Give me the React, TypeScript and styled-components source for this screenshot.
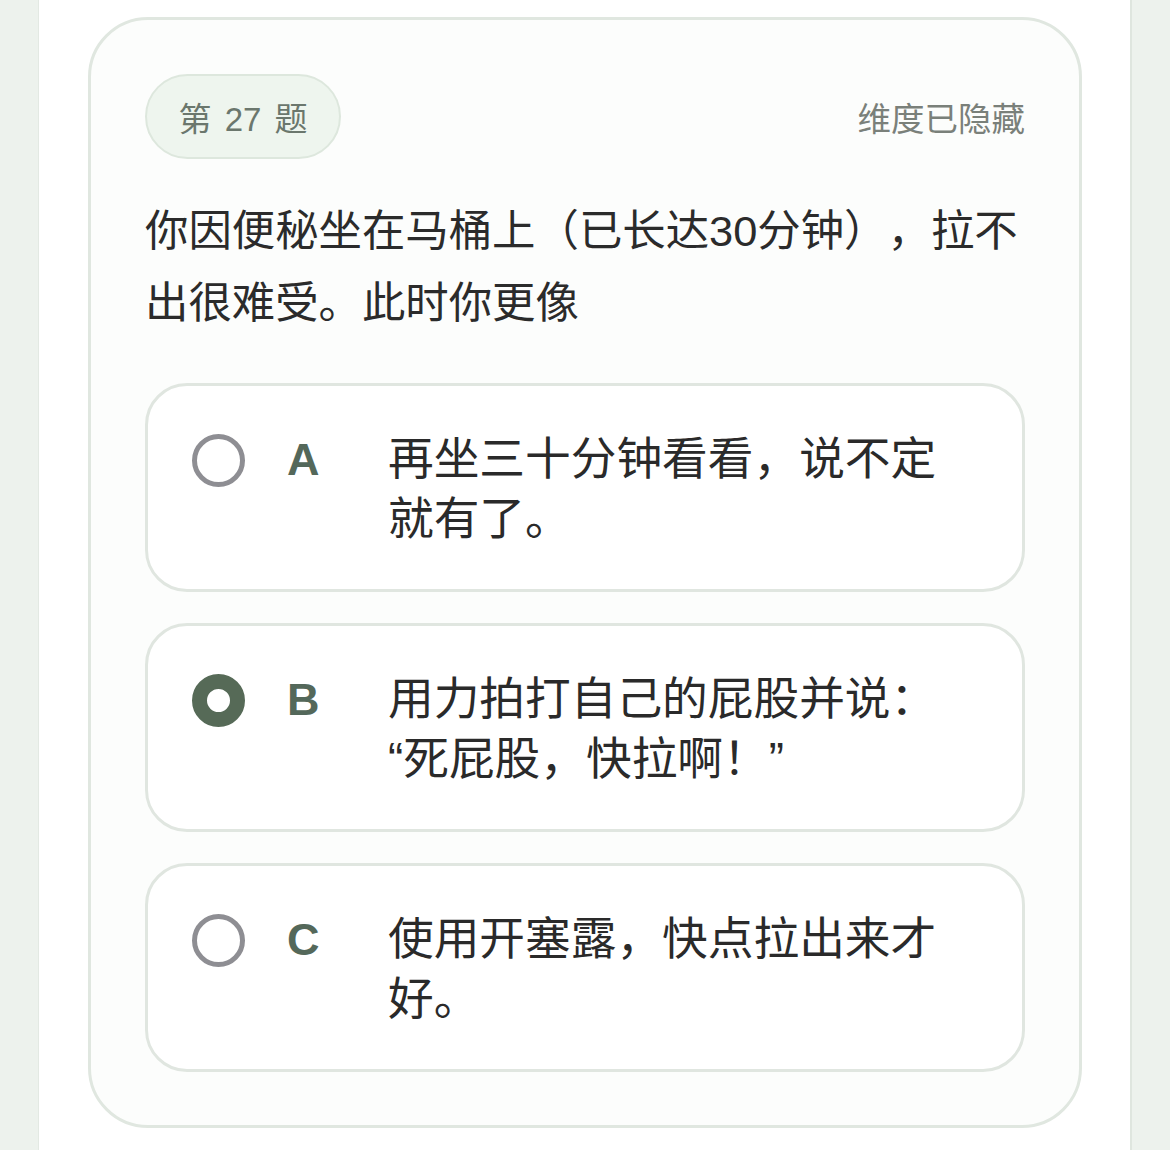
import { createGlobalStyle, styled } from "styled-components";

const GlobalStyle = createGlobalStyle`
  html, body {
    margin: 0;
    padding: 0;
    background: #edf2ed;
    font-family: "Liberation Sans", "Noto Sans CJK SC", sans-serif;
    text-spacing-trim: space-all;
  }
`;

type Option = {
  key: string;
  text: string;
};

// \u200B lets the line break after the colon like the original does
const options: Option[] = [
  { key: "A", text: "再坐三十分钟看看，说不定就有了。" },
  { key: "B", text: "用力拍打自己的屁股并说：\u200B“死屁股，快拉啊！”" },
  { key: "C", text: "使用开塞露，快点拉出来才好。" },
];

export default function App() {
  const selected = "B";

  return (
    <>
      <GlobalStyle />
      <Page>
        <Card>
          <Header>
            <Badge>第 27 题</Badge>
            <HiddenNote>维度已隐藏</HiddenNote>
          </Header>
          <Question>
            你因便秘坐在马桶上（已长达30分钟），拉不出很难受。此时你更像
          </Question>
          <OptionList>
            {options.map((opt) => (
              <OptionRow key={opt.key}>
                <Radio $checked={opt.key === selected} />
                <Letter>{opt.key}</Letter>
                <OptionText>{opt.text}</OptionText>
              </OptionRow>
            ))}
          </OptionList>
        </Card>
      </Page>
    </>
  );
}

const Page = styled.div`
  margin: 0 38px;
  min-height: 1150px;
  background: #ffffff;
  border-left: 1px solid #e3e9e3;
  border-right: 2px solid #dfe6df;
  padding: 17px 48px 0 49px;
  box-sizing: border-box;
`;

const Card = styled.div`
  background: #fcfdfc;
  border: 3px solid #e0e7e0;
  border-radius: 60px;
  padding: 54px 54px 53px;
`;

const Header = styled.div`
  display: flex;
  align-items: center;
  justify-content: space-between;
`;

const Badge = styled.div`
  display: flex;
  align-items: center;
  justify-content: center;
  box-sizing: border-box;
  width: 196px;
  height: 85px;
  border-radius: 43px;
  background: #eef5ee;
  border: 2px solid #dde7dd;
  color: #6b776d;
  font-size: 33px;
  word-spacing: 4px;
`;

const HiddenNote = styled.div`
  font-size: 33.5px;
  color: #7a807a;
`;

const Question = styled.p`
  margin: 36px 0 0;
  font-size: 43.4px;
  line-height: 72px;
  color: #2b2b2b;
`;

const OptionList = styled.div`
  display: flex;
  flex-direction: column;
  gap: 31px;
  margin-top: 44px;
`;

const OptionRow = styled.div`
  display: flex;
  align-items: flex-start;
  background: #ffffff;
  border: 3px solid #e0e6e0;
  border-radius: 42px;
  padding: 44px 56px 39px 44px;
  min-height: 203px;
  box-sizing: border-box;
`;

const Radio = styled.span<{ $checked: boolean }>`
  flex: none;
  box-sizing: border-box;
  width: 53px;
  height: 53px;
  margin-top: 4px;
  border-radius: 50%;
  background: #ffffff;
  border: ${(p) => (p.$checked ? "15px solid #566a57" : "5px solid #8e8e93")};
`;

const Letter = styled.span`
  flex: none;
  width: 101px;
  margin-left: 42px;
  font-size: 45px;
  font-weight: 700;
  line-height: 60px;
  color: #54685a;
`;

const OptionText = styled.div`
  flex: 1;
  font-size: 45.7px;
  line-height: 60px;
  color: #2a2a2a;
`;
